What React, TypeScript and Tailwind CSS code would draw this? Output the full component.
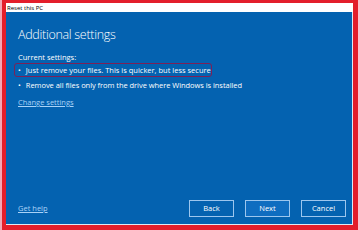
export default function App() {
  return (
    <div className="w-[358px] h-[230px] bg-[#e31e2b] border-l-2 border-[#f2a7b5] pl-[4px] pr-[5px] pt-[3px] pb-[5px] flex flex-col font-['Open_Sans',sans-serif]">
      {/* Title bar */}
      <div className="h-[9px] bg-white flex items-center pl-[1px]">
        <span className="text-[6px] leading-none text-black">Reset this PC</span>
      </div>

      {/* Content */}
      <div className="flex-1 bg-[#0462b0] border-r border-b border-[#dfe9f5] flex flex-col pl-[12px] pr-[6px] pt-[14px] pb-[7px] text-white">
        <h1 className="text-[12.5px] leading-[18px] font-light tracking-[-0.3px]">Additional settings</h1>

        <div className="mt-[8px] text-[7.5px] leading-[10px] whitespace-nowrap">
          <p>Current settings:</p>
          <div className="mt-[1px] -ml-[4px] w-[198px] h-[14px] border-[1.5px] border-[#7c2157] rounded-[3px] flex items-center pl-[3px]">
            <span className="mr-[5px]">•</span>
            <span>Just remove your files. This is quicker, but less secure</span>
          </div>
          <div className="mt-[3px] flex">
            <span className="mr-[5px]">•</span>
            <span className="tracking-[-0.05px]">Remove all files only from the drive where Windows is installed</span>
          </div>
          <a className="block mt-[7px] text-[#a9d2f7] underline">Change settings</a>
        </div>

        <div className="mt-auto flex items-center text-[7.5px]">
          <a className="text-[#a9d2f7] underline">Get help</a>
          <div className="ml-auto flex gap-[11px]">
            <button className="w-[45px] h-[17px] border-[1.5px] border-[#9cc6ee] bg-[#0462b0]">Back</button>
            <button className="w-[45px] h-[17px] border-[1.5px] border-[#9cc6ee] bg-[#0f6dc0]">Next</button>
            <button className="w-[45px] h-[17px] border-[1.5px] border-[#9cc6ee] bg-[#0462b0]">Cancel</button>
          </div>
        </div>
      </div>
    </div>
  );
}
